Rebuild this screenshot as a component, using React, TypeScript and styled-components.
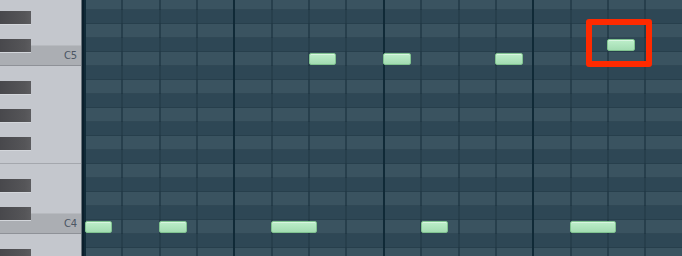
import styled, { createGlobalStyle } from "styled-components";

const ROW = 14;
const BAR = 149.4;
const BEAT = BAR / 4;
const STEP = BAR / 16;
const SCROLL = -102;

const GlobalStyle = createGlobalStyle`
  html, body {
    margin: 0;
    padding: 0;
    background: #2f4856;
  }
  * {
    box-sizing: border-box;
  }
`;

const Roll = styled.div`
  display: flex;
  width: 682px;
  height: 256px;
  overflow: hidden;
  font-family: "DejaVu Sans", "Liberation Sans", sans-serif;
`;

const Keyboard = styled.div`
  position: relative;
  width: 82px;
  flex: none;
  overflow: hidden;
  background: #c4c7cd;
  border-right: 1px solid #69737b;
`;

const Divider = styled.div`
  width: 2px;
  flex: none;
  background: #0b1f2c;
`;

const Scroll = styled.div`
  display: flex;
  flex-direction: column;
  margin-top: ${SCROLL}px;
`;

const Octave = styled.div`
  position: relative;
  display: flex;
  flex-direction: column;
`;

const WhiteKey = styled.div<{ $h: number; $c?: boolean; $edge?: boolean }>`
  display: flex;
  align-items: center;
  justify-content: flex-end;
  height: ${(p) => p.$h}px;
  padding-right: 4px;
  background: ${(p) => (p.$c ? "#abaeb3" : "transparent")};
  border-bottom: ${(p) =>
    p.$c ? "1px solid #8e9197" : p.$edge ? "1px solid #a4a7ad" : "none"};
  border-top: ${(p) => (p.$c ? "1px solid #b7babf" : "none")};
  color: #4c5663;
  font-size: 10px;
  letter-spacing: -0.2px;
`;

const BlackKey = styled.div`
  position: absolute;
  left: 0;
  width: 31px;
  height: 13px;
  background: linear-gradient(to right, #48484c, #555558 80%, #5c5c5f);
  box-shadow: 0 1px 0 #d3d6db;
`;

const Grid = styled.div`
  position: relative;
  flex: 1;
  overflow: hidden;
`;

const Lane = styled.div<{ $light: boolean }>`
  height: ${ROW}px;
  flex: none;
  background:
    repeating-linear-gradient(to right, #102a37 0 2px, transparent 2px ${BAR}px),
    repeating-linear-gradient(to right, #273f4c 0 2px, transparent 2px ${BEAT}px),
    ${(p) => (p.$light ? "#3a5360" : "#2e4755")};
  border-bottom: 1px solid rgba(20, 40, 52, 0.25);
`;

const Note = styled.div`
  position: absolute;
  height: 12px;
  border: 1px solid #80c390;
  border-radius: 2px;
  background: linear-gradient(#bdeeca, #a3dcb2);
  box-shadow: inset 0 1px 0 rgba(255, 255, 255, 0.45);
`;

const Highlight = styled.div`
  position: absolute;
  left: 502px;
  top: 19px;
  width: 66px;
  height: 48px;
  border: 6px solid #ff2a00;
  border-radius: 3px;
`;

const whiteKeys = [
  { n: "B", h: 21 },
  { n: "A", h: 28 },
  { n: "G", h: 28 },
  { n: "F", h: 21, edge: true },
  { n: "E", h: 21 },
  { n: "D", h: 28 },
  { n: "C", h: 21 },
];

// semitone index from the top of an octave (B = 0)
const blackRows = [1, 3, 5, 8, 10];

const octaves = [5, 4, 3];

// row index counted from B5 at the top
const rowOf = (name: string, oct: number) => {
  const order = ["B", "A#", "A", "G#", "G", "F#", "F", "E", "D#", "D", "C#", "C"];
  return (5 - oct) * 12 + order.indexOf(name);
};

const notes = [
  { pitch: ["C", 4], start: 0, len: 3 },
  { pitch: ["C", 4], start: 8, len: 3 },
  { pitch: ["C", 4], start: 20, len: 5 },
  { pitch: ["C", 4], start: 36, len: 3 },
  { pitch: ["C", 4], start: 52, len: 5 },
  { pitch: ["C", 5], start: 24, len: 3 },
  { pitch: ["C", 5], start: 32, len: 3 },
  { pitch: ["C", 5], start: 44, len: 3 },
  { pitch: ["C#", 5], start: 56, len: 3 },
] as { pitch: [string, number]; start: number; len: number }[];

export default function App() {
  const lanes = Array.from({ length: octaves.length * 12 }, (_, i) => i);
  return (
    <>
      <GlobalStyle />
      <Roll>
        <Keyboard>
          <Scroll>
            {octaves.map((oct) => (
              <Octave key={oct}>
                {whiteKeys.map((k) => (
                  <WhiteKey key={k.n} $h={k.h} $c={k.n === "C"} $edge={k.edge}>
                    {/* only the C keys that scroll into view get a label */}
                    {k.n === "C" && oct >= 4 ? `C${oct}` : null}
                  </WhiteKey>
                ))}
                {blackRows.map((r) => (
                  <BlackKey key={r} style={{ top: r * ROW + 1 }} />
                ))}
              </Octave>
            ))}
          </Scroll>
        </Keyboard>
        <Divider />
        <Grid>
          <Scroll>
            {lanes.map((i) => (
              <Lane key={i} $light={i % 2 === 1} />
            ))}
          </Scroll>
          {notes.map((n, i) => (
            <Note
              key={i}
              style={{
                left: n.start * STEP + 0.5,
                width: n.len * STEP - 0.5,
                top: SCROLL + rowOf(n.pitch[0], n.pitch[1]) * ROW + 1,
              }}
            />
          ))}
          <Highlight />
        </Grid>
      </Roll>
    </>
  );
}
